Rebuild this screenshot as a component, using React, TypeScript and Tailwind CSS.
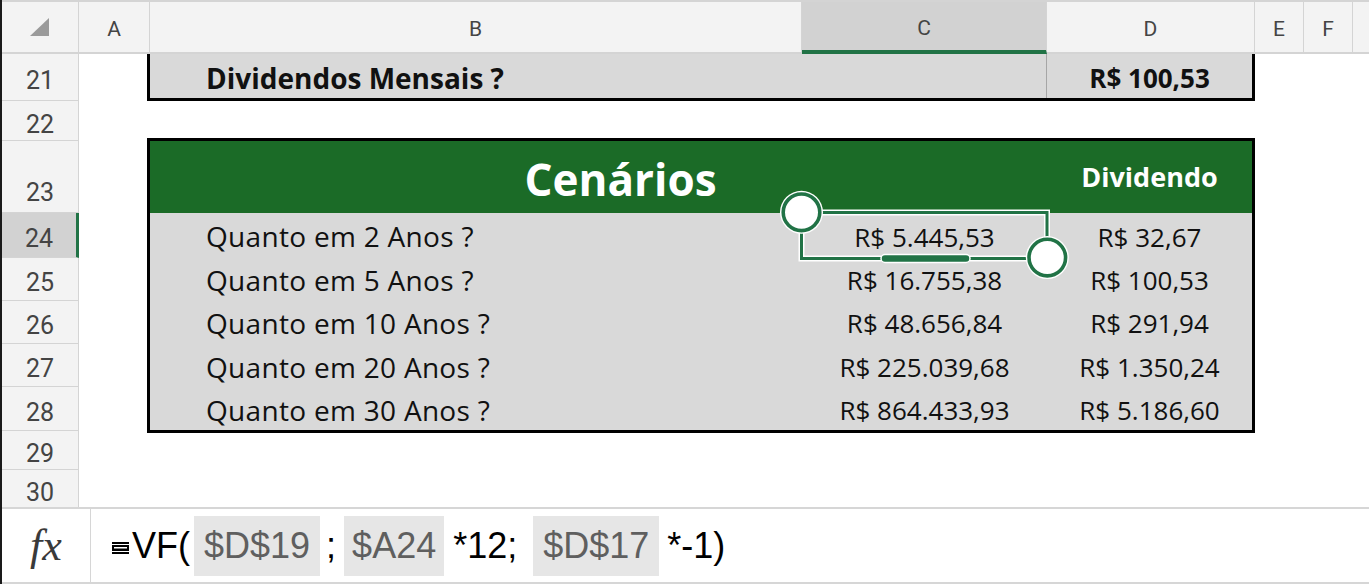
import React from 'react';

const rowHdr = [
  { n: 21, h: 'h-[47px]', sel: false, end: false, line: true },
  { n: 22, h: 'h-[40px]', sel: false, end: false, line: true },
  { n: 23, h: 'h-[72px]', sel: false, end: true, line: true },
  { n: 24, h: 'h-[45px]', sel: true, end: false, line: true },
  { n: 25, h: 'h-[43px]', sel: false, end: false, line: true },
  { n: 26, h: 'h-[43px]', sel: false, end: false, line: true },
  { n: 27, h: 'h-[43px]', sel: false, end: false, line: true },
  { n: 28, h: 'h-[44px]', sel: false, end: false, line: true },
  { n: 29, h: 'h-[39px]', sel: false, end: false, line: true },
  { n: 30, h: 'h-[37px]', sel: false, end: false, line: false },
];

const data = [
  ['Quanto em 2 Anos ?', 'R$ 5.445,53', 'R$ 32,67'],
  ['Quanto em 5 Anos ?', 'R$ 16.755,38', 'R$ 100,53'],
  ['Quanto em 10 Anos ?', 'R$ 48.656,84', 'R$ 291,94'],
  ['Quanto em 20 Anos ?', 'R$ 225.039,68', 'R$ 1.350,24'],
  ['Quanto em 30 Anos ?', 'R$ 864.433,93', 'R$ 5.186,60'],
];

const cellFont = { fontFamily: '"Open Sans", "Noto Sans", sans-serif' };
const hdrFont = { fontFamily: 'Roboto, "Noto Sans", sans-serif' };

function ColHdr({ w, label, sel }: { w: string; label: string; sel?: boolean }) {
  return (
    <div
      className={`${w} shrink-0 h-full flex items-center justify-center pt-[4px] border-r border-[#d4d4d4] text-[21px] leading-none text-[#444] ${
        sel ? 'bg-[#d2d2d2] border-b-4 border-b-[#217346]' : 'border-b-2 border-b-[#d4d4d4]'
      }`}
    >
      {label}
    </div>
  );
}

function RefBox({ children, px }: { children: React.ReactNode; px: string }) {
  return <span className={`h-[60px] flex items-center ${px} bg-[#e6e6e6] text-[#5f5f5f]`}>{children}</span>;
}

export default function App() {
  return (
    <div className="relative w-[1369px] h-[584px] overflow-hidden bg-white flex">
      <div className="w-[2px] h-full bg-[#1a1a1a] shrink-0" />
      <div className="flex-1 flex flex-col">
        {/* Column header */}
        <div className="h-[54px] flex border-t-2 border-[#d4d4d4] bg-[#f3f3f3]" style={hdrFont}>
          <div className="w-[77px] shrink-0 h-full flex items-center justify-center border-r border-b-2 border-[#d4d4d4]">
            <svg width="20" height="19" viewBox="0 0 20 19">
              <polygon points="19,0 19,18 0,18" fill="#9a9a9a" />
            </svg>
          </div>
          <ColHdr w="w-[71px]" label="A" />
          <ColHdr w="w-[652px]" label="B" />
          <ColHdr w="w-[245px]" label="C" sel />
          <ColHdr w="w-[208px]" label="D" />
          <ColHdr w="w-[49px]" label="E" />
          <ColHdr w="w-[49px]" label="F" />
          <div className="flex-1 h-full border-b-2 border-[#d4d4d4]" />
        </div>

        {/* Sheet body */}
        <div className="h-[453px] flex">
          <div className="w-[77px] shrink-0 flex flex-col bg-[#f3f3f3] text-[25px] leading-none text-[#444]" style={hdrFont}>
            {rowHdr.map((r) => (
              <div
                key={r.n}
                className={`${r.h} shrink-0 flex justify-center ${r.end ? 'items-end pb-[7px]' : 'items-center pt-[7px]'} ${
                  r.line ? 'border-b border-b-[#d4d4d4]' : ''
                } ${r.sel ? 'bg-[#d2d2d2] border-r-[3px] border-r-[#217346]' : 'border-r border-r-[#d4d4d4]'}`}
              >
                {r.n}
              </div>
            ))}
          </div>

          <div className="flex-1 flex flex-col text-[#111] leading-[1.2]" style={cellFont}>
            {/* Row 21 */}
            <div className="ml-[68px] w-[1108px] h-[47px] flex border-x-[3px] border-b-[3px] border-black bg-[#d9d9d9]">
              <div className="w-[896px] flex items-center pt-[6px] pl-[56px] text-[28px] font-bold">
                Dividendos Mensais ?
              </div>
              <div className="w-px bg-[#a6a6a6]" />
              <div className="flex-1 flex items-center justify-center pt-[6px] text-[26px] font-bold">R$ 100,53</div>
            </div>

            {/* Table 2 */}
            <div className="ml-[68px] mt-[37px] w-[1108px] flex flex-col border-[3px] border-black">
              <div className="h-[72px] flex bg-[#1b6b27] text-white">
                <div className="w-[897px] flex items-center justify-center pl-[44px] pt-[4px] text-[44px] font-bold">
                  Cenários
                </div>
                <div className="flex-1 flex items-center justify-center text-[27px] font-bold">Dividendo</div>
              </div>
              <div className="h-[217px] flex flex-col bg-[#d9d9d9]">
                {data.map((d) => (
                  <div key={d[0]} className="h-[43.4px] flex items-center pt-[5px]">
                    <div className="w-[652px] pl-[56px] text-[28px] tracking-[0.3px]">{d[0]}</div>
                    <div className="w-[245px] text-center text-[26px]">{d[1]}</div>
                    <div className="flex-1 text-center text-[26px]">{d[2]}</div>
                  </div>
                ))}
              </div>
            </div>
          </div>
        </div>

        {/* Formula bar */}
        <div className="flex-1 flex border-t-2 border-b-2 border-[#d6d6d6]">
          <div className="w-[89px] shrink-0 flex items-center justify-center border-r border-[#d6d6d6]">
            <span
              className="text-[44px] italic text-[#3a3a3a] leading-none"
              style={{ fontFamily: '"Liberation Serif", "DejaVu Serif", serif' }}
            >
              fx
            </span>
          </div>
          <div
            className="flex-1 flex items-center pl-[21px] text-[36px] text-black"
            style={{ fontFamily: '"Liberation Sans", Arial, sans-serif' }}
          >
            <svg width="17" height="12" viewBox="0 0 17 12" className="mt-[4px]">
              <rect x="0" y="0" width="17" height="2" fill="#000" />
              <rect x="0" y="3" width="17" height="6" fill="#000" />
              <rect x="2" y="5" width="13" height="1.5" fill="#fff" />
              <rect x="0" y="10" width="17" height="2" fill="#000" />
            </svg>
            <span className="ml-[3px]">VF(</span>
            <span className="ml-[4px]">
              <RefBox px="px-[10px]">$D$19</RefBox>
            </span>
            <span className="ml-[6px]">;</span>
            <span className="ml-[8px]">
              <RefBox px="px-[8px]">$A24</RefBox>
            </span>
            <span className="ml-[9px]">*12;</span>
            <span className="ml-[16px]">
              <RefBox px="px-[10px]">$D$17</RefBox>
            </span>
            <span className="ml-[8px]">*-1)</span>
          </div>
        </div>
      </div>

      {/* Selection overlay */}
      <svg className="absolute left-0 top-0 pointer-events-none" width="1369" height="584" viewBox="0 0 1369 584">
        <path d="M801.5,212.5 H1047 V257.5 M801.5,212.5 V258.5 H1047" fill="none" stroke="#fff" strokeWidth="6" />
        <path d="M801.5,212.5 H1047 V257.5 M801.5,212.5 V258.5 H1047" fill="none" stroke="#217346" strokeWidth="3" />
        <rect x="881" y="254.5" width="89" height="8" rx="4" fill="#217346" stroke="#fff" strokeWidth="1.5" />
        <circle cx="801.5" cy="212.3" r="21.5" fill="#fff" />
        <circle cx="801.5" cy="212.3" r="18.3" fill="#fff" stroke="#217346" strokeWidth="3.6" />
        <circle cx="1047.3" cy="257.6" r="21.5" fill="#fff" />
        <circle cx="1047.3" cy="257.6" r="18.3" fill="#fff" stroke="#217346" strokeWidth="3.6" />
      </svg>
    </div>
  );
}
